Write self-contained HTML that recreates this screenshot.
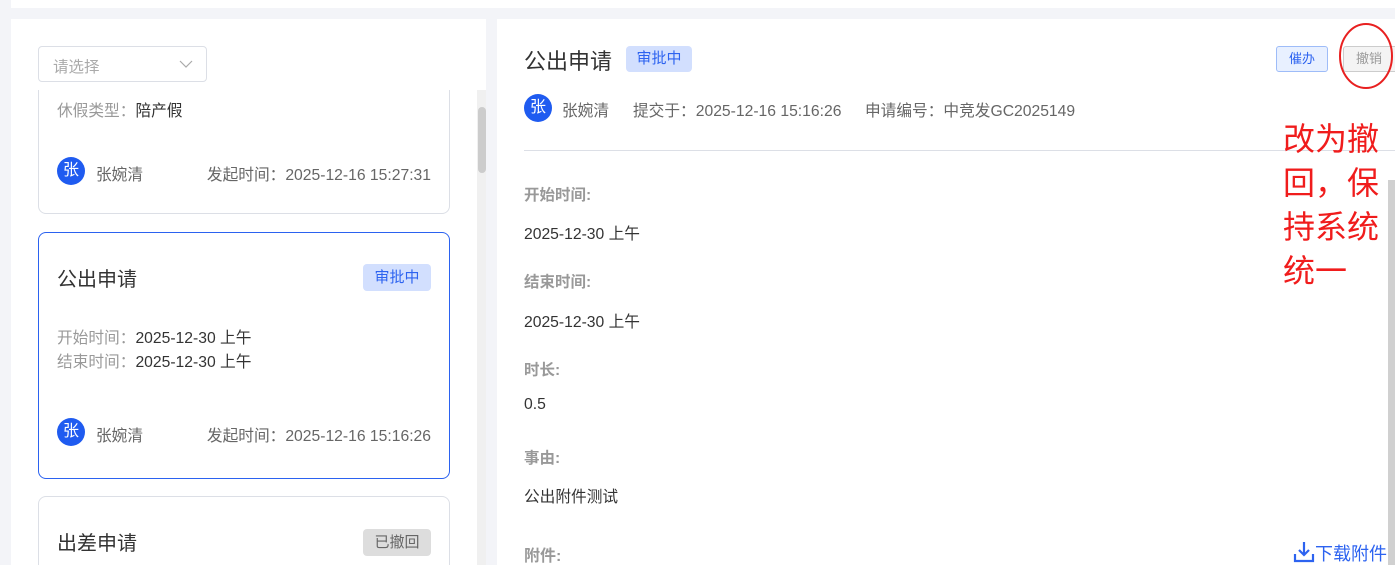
<!DOCTYPE html>
<html><head><meta charset="utf-8"><style>
*{margin:0;padding:0;box-sizing:border-box}
html,body{width:1395px;height:565px;overflow:hidden}
body{background:#f3f4f8;font-family:"Liberation Sans","Noto Sans CJK SC",sans-serif;position:relative}
.a{position:absolute;white-space:nowrap}
.card{position:absolute;left:38px;width:412px;border:1px solid #dcdfe6;border-radius:8px;background:#fff}
.av{position:absolute;width:28px;height:28px;border-radius:50%;background:#1f5bf0;color:#fff;font-size:16px;text-align:center;line-height:28px}
.g{color:#999}.d{color:#333}
.lbl{position:absolute;left:524px;font-size:15.5px;font-weight:bold;color:#999}
.val{position:absolute;left:524px;font-size:15.7px;color:#333}
</style></head><body>
<div class="a" style="left:0;top:0;width:1395px;height:8px;background:#fff"></div>
<div class="a" style="left:0;top:0;width:11px;height:8px;background:#f3f4f8"></div>
<!-- left panel -->
<div class="a" style="left:11px;top:19px;width:475px;height:546px;background:#fff;overflow:hidden">
 <div class="a" style="left:0;top:71px;width:475px;height:475px;overflow:hidden">
  <div class="card" style="left:27px;top:-120px;height:244px">
   <div class="a" style="left:18px;top:131px;font-size:15.7px;line-height:20px"><span class="g">休假类型：</span><span class="d">陪产假</span></div>
   <div class="av" style="left:18px;top:186px">张</div>
   <div class="a" style="left:57px;top:191px;font-size:15.7px;color:#666">张婉清</div>
   <div class="a" style="right:18px;top:191px;font-size:15.7px;color:#666">发起时间：2025-12-16 15:27:31</div>
  </div>
  <div class="card" style="left:27px;top:142px;height:247px;border-color:#2b62f0">
   <div class="a" style="left:18px;top:30px;font-size:20px;color:#333">公出申请</div>
   <div class="a" style="right:18px;top:31px;width:68px;height:27px;background:#d2dffe;color:#2d63f0;border-radius:4px;font-size:15px;text-align:center;line-height:27px">审批中</div>
   <div class="a" style="left:18px;top:94px;font-size:15.7px;line-height:24px"><span class="g">开始时间：</span><span class="d">2025-12-30 上午</span><br><span class="g">结束时间：</span><span class="d">2025-12-30 上午</span></div>
   <div class="av" style="left:18px;top:185px">张</div>
   <div class="a" style="left:57px;top:190px;font-size:15.7px;color:#666">张婉清</div>
   <div class="a" style="right:18px;top:190px;font-size:15.7px;color:#666">发起时间：2025-12-16 15:16:26</div>
  </div>
  <div class="card" style="left:27px;top:406px;height:120px">
   <div class="a" style="left:18px;top:30px;font-size:20px;color:#333">出差申请</div>
   <div class="a" style="right:18px;top:32px;width:68px;height:27px;background:#ddd;color:#666;border-radius:4px;font-size:15px;text-align:center;line-height:27px">已撤回</div>
  </div>
  <div class="a" style="left:466px;top:0;width:9px;height:475px;background:#f0f0f0"></div>
  <div class="a" style="left:467px;top:17px;width:8px;height:66px;background:#ccc;border-radius:4px"></div>
 </div>
 <div class="a" style="left:27px;top:27px;width:169px;height:36px;border:1px solid #dcdfe6;border-radius:4px;background:#fff">
  <div class="a" style="left:14px;top:8px;font-size:15.5px;color:#aaa">请选择</div>
  <svg class="a" style="left:140px;top:12px" width="14" height="10" viewBox="0 0 14 10"><path d="M1 2l6 6 6-6" fill="none" stroke="#aaa" stroke-width="1.2"/></svg>
 </div>
</div>
<!-- right panel -->
<div class="a" style="left:497px;top:19px;width:898px;height:546px;background:#fff"></div>
<div class="a" style="left:524px;top:44px;font-size:22px;color:#333">公出申请</div>
<div class="a" style="left:626px;top:46px;width:66px;height:26px;background:#d2dffe;color:#2d63f0;border-radius:4px;font-size:15px;text-align:center;line-height:26px">审批中</div>
<div class="a" style="left:1276px;top:46px;width:52px;height:26px;background:#e8f0ff;border:1px solid #9ebcf8;border-radius:3px;color:#2d63f0;font-size:13px;text-align:center;line-height:24px">催办</div>
<div class="a" style="left:1343px;top:46px;width:60px;height:26px;background:#f4f4f4;border:1px solid #ccc;border-radius:3px;color:#999;font-size:13px;line-height:24px;padding-left:12px">撤销</div>
<svg class="a" style="left:1330px;top:15px" width="65" height="80"><ellipse cx="36" cy="41" rx="26" ry="32" fill="none" stroke="#e82020" stroke-width="2"/></svg>
<div class="av" style="left:524px;top:94px">张</div>
<div class="a" style="left:562px;top:98px;font-size:15.7px;color:#666">张婉清</div>
<div class="a" style="left:633px;top:98px;font-size:15.7px;color:#666">提交于：2025-12-16 15:16:26</div>
<div class="a" style="left:865px;top:98px;font-size:15.7px;color:#666">申请编号：中竞发GC2025149</div>
<div class="a" style="left:524px;top:150px;width:871px;height:1px;background:#dcdfe6"></div>
<div class="lbl" style="top:183px">开始时间:</div>
<div class="val" style="top:221px">2025-12-30 上午</div>
<div class="lbl" style="top:270px">结束时间:</div>
<div class="val" style="top:309px">2025-12-30 上午</div>
<div class="lbl" style="top:358px">时长:</div>
<div class="val" style="top:396px">0.5</div>
<div class="lbl" style="top:446px">事由:</div>
<div class="val" style="top:484px">公出附件测试</div>
<div class="lbl" style="top:542px;font-size:16px">附件:</div>
<div class="a" style="left:1283px;top:117px;font-size:32px;line-height:44px;color:#f01c1c;white-space:normal;width:100px">改为撤<br>回，保<br>持系统<br>统一</div>
<div class="a" style="left:1388px;top:180px;width:7px;height:385px;background:#d0d0d0"></div>
<svg class="a" style="left:1293px;top:541px" width="22" height="22" viewBox="0 0 22 22"><path d="M11 1v13M6 9l5 5 5-5" fill="none" stroke="#2d63f0" stroke-width="2.2"/><path d="M2 13v7h18v-7" fill="none" stroke="#2d63f0" stroke-width="2.2"/></svg>
<div class="a" style="left:1315px;top:540px;font-size:18px;color:#2d63f0">下载附件</div>
</body></html>
